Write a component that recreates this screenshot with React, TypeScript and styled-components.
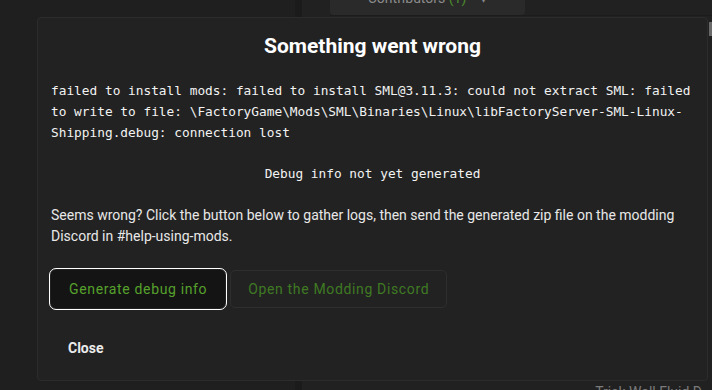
import React from "react";
import styled, { createGlobalStyle } from "styled-components";

const Global = createGlobalStyle`
  html, body { margin: 0; padding: 0; background: #1f1f1f; }
  body { font-family: Roboto, "Noto Sans", sans-serif; overflow: hidden; }
  * { box-sizing: border-box; }
`;

const Page = styled.div`
  position: relative;
  width: 712px;
  height: 390px;
  overflow: hidden;
  display: flex;
  background: #1f1f1f;
`;

const Sidebar = styled.div`
  width: 295px;
  flex-shrink: 0;
  background: #1f1f1f;
`;

const Divider = styled.div`
  width: 7px;
  flex-shrink: 0;
  background: #1b1b1b;
`;

const Main = styled.div`
  flex: 1;
  display: flex;
  flex-direction: column;
  background: #212121;
  padding-left: 28px;
`;

const TopBar = styled.div`
  height: 16px;
  border-bottom: 1px solid #1c1c1c;
  display: flex;
`;

const ContribTab = styled.div`
  width: 195px;
  height: 15px;
  background: #2a2a2a;
  border-radius: 0 0 4px 4px;
  display: flex;
  justify-content: center;
  align-items: flex-end;
  overflow: hidden;
  color: #8a8a8a;
  font-size: 14px;
  gap: 14px;
`;

const ContribText = styled.span`
  line-height: 14px;
  margin-bottom: 10px;
`;

const Green = styled.span`
  color: #4a8a2a;
`;

const Spacer = styled.div`
  flex: 1;
`;

const BottomText = styled.div`
  align-self: flex-end;
  margin-right: 10px;
  margin-bottom: -9px;
  color: #7a7a7a;
  font-size: 14px;
  line-height: 14px;
  white-space: nowrap;
`;

const Thumb = styled.div`
  position: absolute;
  right: 0;
  top: 22px;
  width: 3px;
  height: 14px;
  background: #6a6a6a;
`;

const Dialog = styled.div`
  position: absolute;
  left: 37px;
  top: 17px;
  width: 671px;
  height: 364px;
  background: #222222;
  border: 1px solid #2c2c2c;
  border-radius: 4px;
  padding: 12px 13px 0 13px;
  display: flex;
  flex-direction: column;
  color: #e6e6e6;
`;

const Title = styled.h2`
  margin: 0;
  text-align: center;
  font-size: 21px;
  font-weight: 700;
  line-height: 32px;
  color: #ffffff;
`;

const Mono = styled.div<{ $center?: boolean }>`
  font-family: "DejaVu Sans Mono", "Liberation Mono", monospace;
  font-size: 12.8px;
  line-height: 21px;
  color: #f2f2f2;
  text-align: ${(p) => (p.$center ? "center" : "left")};
  white-space: pre-wrap;
  word-break: break-word;
`;

const ErrorText = styled(Mono)`
  margin-top: 18px;
`;

const DebugText = styled(Mono)`
  margin-top: 20px;
`;

const Para = styled.p`
  margin: 21px 0 0 0;
  font-size: 14px;
  line-height: 21px;
  color: #e8e8e8;
`;

const Buttons = styled.div`
  display: flex;
  gap: 5px;
  margin-top: 23px;
`;

const ActionButton = styled.button<{ $focused?: boolean; $dim?: boolean }>`
  height: 38px;
  padding: 0 17px;
  font-family: Roboto, sans-serif;
  font-size: 14px;
  font-weight: 400;
  letter-spacing: 0.65px;
  border-radius: 5px;
  cursor: pointer;
  background: ${(p) => (p.$focused ? "#141414" : "transparent")};
  color: ${(p) => (p.$dim ? "#3f7a22" : "#56a12c")};
  border: 1px solid ${(p) => (p.$focused ? "#141414" : "#2e2e2e")};
  outline: ${(p) => (p.$focused ? "1.5px solid #ffffff" : "none")};
  outline-offset: 1px;
`;

const CloseButton = styled.button`
  align-self: flex-start;
  margin-top: 21px;
  height: 37px;
  padding: 0 17px;
  background: transparent;
  border: none;
  color: #ececec;
  font-family: Roboto, sans-serif;
  font-size: 14px;
  font-weight: 700;
  cursor: pointer;
`;

export default function App() {
  return (
    <>
      <Global />
      <Page>
        <Sidebar />
        <Divider />
        <Main>
          <TopBar>
            <ContribTab>
              <ContribText>
                Contributors <Green>(1)</Green>
              </ContribText>
              <ContribText>▾</ContribText>
            </ContribTab>
          </TopBar>
          <Spacer />
          <BottomText>Trick Wall Fluid D</BottomText>
        </Main>
        <Thumb />
        <Dialog>
          <Title>Something went wrong</Title>
          <ErrorText>
            failed to install mods: failed to install SML@3.11.3: could not extract SML: failed to write to file: \FactoryGame\Mods\SML\Binaries\Linux\libFactoryServer-SML-Linux-Shipping.debug: connection lost
          </ErrorText>
          <DebugText $center>Debug info not yet generated</DebugText>
          <Para>
            Seems wrong? Click the button below to gather logs, then send the generated zip file on the modding Discord in #help-using-mods.
          </Para>
          <Buttons>
            <ActionButton $focused>Generate debug info</ActionButton>
            <ActionButton $dim>Open the Modding Discord</ActionButton>
          </Buttons>
          <CloseButton>Close</CloseButton>
        </Dialog>
      </Page>
    </>
  );
}
